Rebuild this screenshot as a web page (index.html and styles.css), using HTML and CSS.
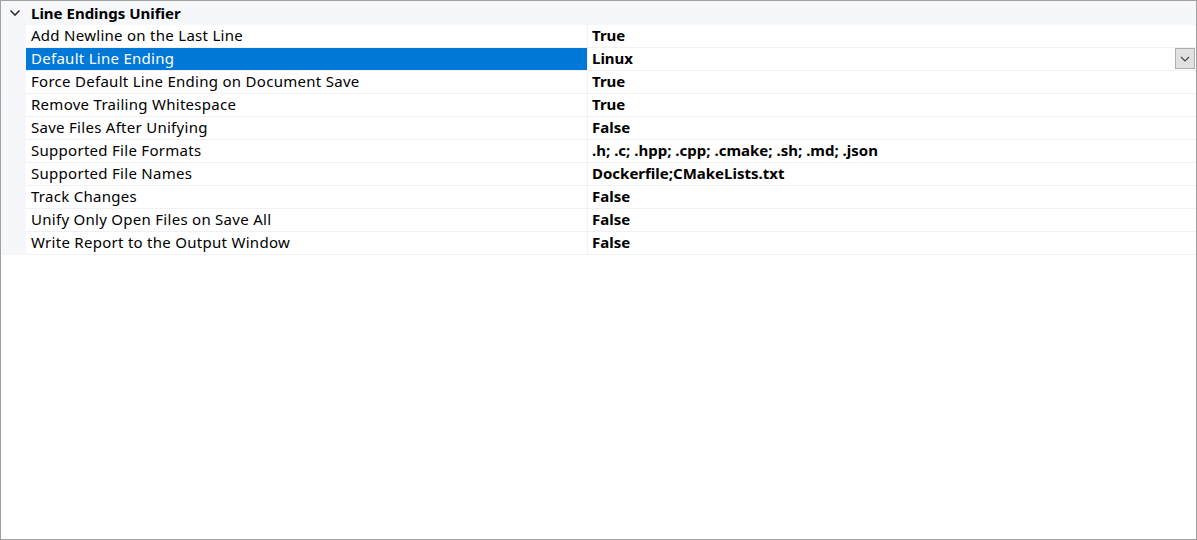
FILE: index.html
```html
<!DOCTYPE html>
<html>
<head>
<meta charset="utf-8">
<link rel="stylesheet" href="styles.css">
</head>
<body>
<div class="grid">
  <div class="cat">
    <span class="chev"><svg width="12" height="8" viewBox="0 0 12 8"><path d="M1.5 1.5 L6 6 L10.5 1.5" fill="none" stroke="#333" stroke-width="1.6"/></svg></span>
    <span class="cat-title">Line Endings Unifier</span>
  </div>
  <div class="body">
    <div class="gutter"></div>
    <div class="rows">
      <div class="row"><div class="name">Add Newline on the Last Line</div><div class="val">True</div></div>
      <div class="row sel"><div class="name">Default Line Ending</div><div class="val">Linux<span class="drop"><svg width="10" height="6" viewBox="0 0 10 6"><path d="M1 1 L5 5 L9 1" fill="none" stroke="#444" stroke-width="1.1"/></svg></span></div></div>
      <div class="row"><div class="name">Force Default Line Ending on Document Save</div><div class="val">True</div></div>
      <div class="row"><div class="name">Remove Trailing Whitespace</div><div class="val">True</div></div>
      <div class="row"><div class="name">Save Files After Unifying</div><div class="val">False</div></div>
      <div class="row"><div class="name">Supported File Formats</div><div class="val">.h; .c; .hpp; .cpp; .cmake; .sh; .md; .json</div></div>
      <div class="row"><div class="name">Supported File Names</div><div class="val">Dockerfile;CMakeLists.txt</div></div>
      <div class="row"><div class="name">Track Changes</div><div class="val">False</div></div>
      <div class="row"><div class="name">Unify Only Open Files on Save All</div><div class="val">False</div></div>
      <div class="row"><div class="name">Write Report to the Output Window</div><div class="val">False</div></div>
    </div>
  </div>
</div>
</body>
</html>
```
FILE: styles.css
```css
html, body { margin: 0; padding: 0; background: #fff; }
body { font-family: "Noto Sans", "Open Sans", sans-serif; font-size: 15px; color: #000; }
.grid {
  width: 1197px; height: 540px; box-sizing: border-box;
  border: 1px solid #a0a0a0;
  background: #fff;
}
.cat {
  height: 24px; background: #f5f7fb; display: flex; align-items: center;
}
.chev { width: 25px; display: flex; justify-content: center; padding-left: 2px; box-sizing: border-box; }
.cat-title { font-weight: bold; padding-left: 5px; line-height: 22px; }
.body { display: flex; }
.gutter { width: 25px; background: #f5f7fb; }
.rows { flex: 1; }
.row {
  display: grid; grid-template-columns: 562px 1fr;
  height: 23px; box-sizing: border-box; border-bottom: 1px solid #f0f0f5;
}
.name { padding-left: 5px; line-height: 21px; white-space: nowrap; border-right: 1px solid #f0f0f5; letter-spacing: 0.28px; }
.val { padding-left: 4px; line-height: 21px; font-weight: bold; white-space: nowrap; display: flex; }
.sel .name { background: #0078d7; color: #fff; }
.drop {
  margin-left: auto; margin-right: 1px; width: 20px; height: 21px; box-sizing: border-box;
  background: #e1e1e1; border: 1px solid #adadad;
  display: flex; align-items: center; justify-content: center;
}
```
